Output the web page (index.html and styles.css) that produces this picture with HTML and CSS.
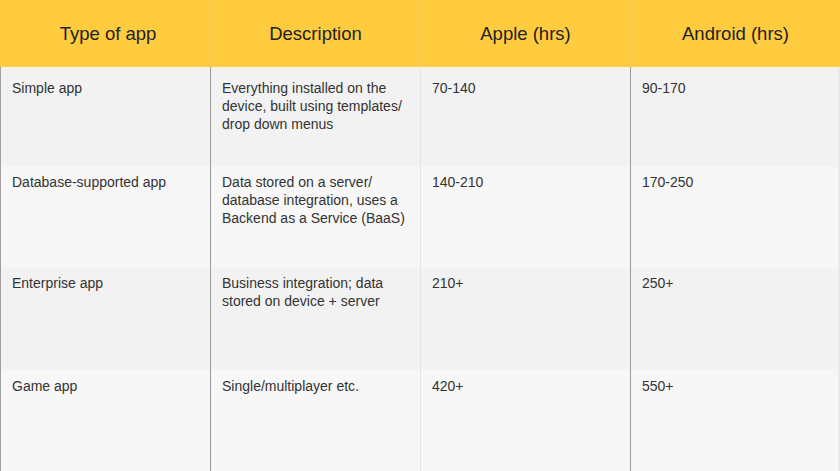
FILE: index.html
```html
<!DOCTYPE html>
<html>
<head>
<meta charset="utf-8">
<link rel="stylesheet" href="styles.css">
</head>
<body>
<div class="table">
  <div class="th c1">Type of app</div>
  <div class="th c2">Description</div>
  <div class="th c3">Apple (hrs)</div>
  <div class="th c4">Android (hrs)</div>

  <div class="td c1 r1">Simple app</div>
  <div class="td c2 r1">Everything installed on the device, built using templates/ drop down menus</div>
  <div class="td c3 r1">70-140</div>
  <div class="td c4 r1">90-170</div>

  <div class="td c1 r2">Database-supported app</div>
  <div class="td c2 r2">Data stored on a server/ database integration, uses a Backend as a Service (BaaS)</div>
  <div class="td c3 r2">140-210</div>
  <div class="td c4 r2">170-250</div>

  <div class="td c1 r3">Enterprise app</div>
  <div class="td c2 r3">Business integration; data stored on device + server</div>
  <div class="td c3 r3">210+</div>
  <div class="td c4 r3">250+</div>

  <div class="td c1 r4">Game app</div>
  <div class="td c2 r4">Single/multiplayer etc.</div>
  <div class="td c3 r4">420+</div>
  <div class="td c4 r4">550+</div>
</div>
</body>
</html>
```

FILE: styles.css
```css
html, body {
  margin: 0;
  padding: 0;
  background: #f5f5f5;
}
.table {
  display: grid;
  grid-template-columns: 210px 210px 210px 210px;
  grid-template-rows: 67px 100px 101px 101px 102px;
  width: 840px;
  height: 471px;
  font-family: "Liberation Sans", Arial, sans-serif;
}
.th {
  background: #ffcc40;
  color: #222;
  font-size: 18.5px;
  display: flex;
  align-items: center;
  justify-content: center;
  box-sizing: border-box;
}
.th.c1 { padding-left: 6px; }
.th.c2, .th.c3, .th.c4 {
  border-left: 1px solid #f9cf55;
}
.td {
  box-sizing: border-box;
  padding: 12px 8px 0 11px;
  font-size: 14px;
  line-height: 18px;
  color: #333;
}
.td.c2 { padding-right: 4px; }
.r1, .r3 { background: #f2f2f2; }
.r2, .r4 { background: #f7f7f7; }
.r2, .r3 { padding-top: 6px; }
.r4 { padding-top: 8px; }
.td.c1 { border-left: 1px solid #a0a0a0; }
.td.c2 { border-left: 1px solid #9a9a9a; }
.td.c3 { border-left: 1px solid #e6e6e6; }
.td.c4 { border-left: 1px solid #9a9a9a; border-right: 2px solid #e9e9e9; }
```
